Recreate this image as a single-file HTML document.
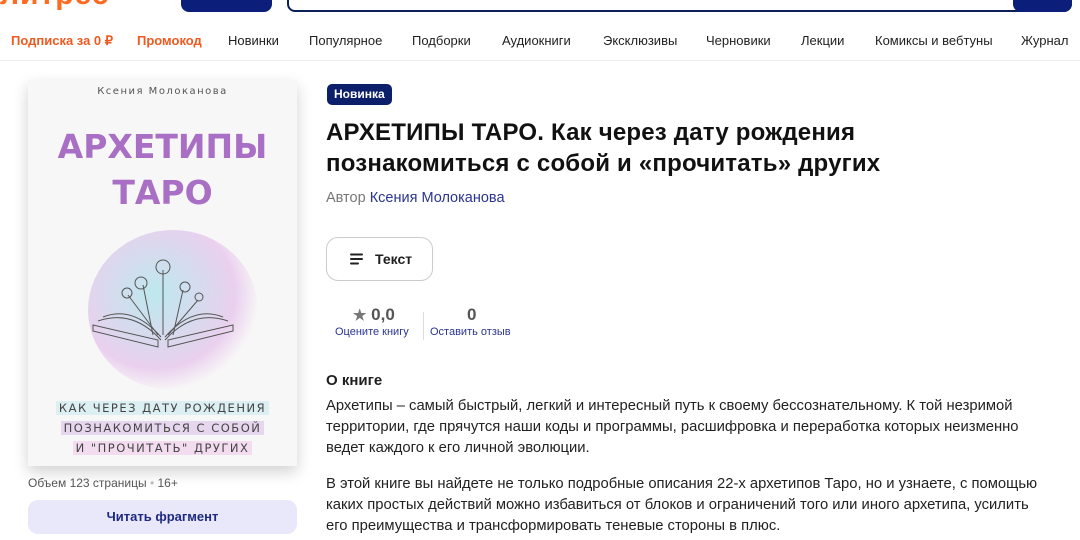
<!DOCTYPE html>
<html><head><meta charset="utf-8"><style>
*{margin:0;padding:0;box-sizing:border-box}
body{width:1080px;height:540px;overflow:hidden;background:#fff;font-family:"Liberation Sans",sans-serif;color:#1f1f1f;position:relative}
.a{position:absolute}
.nav span{position:absolute;top:33px;font-size:13px;color:#1f1f1f;white-space:nowrap}
.cv{font-family:"DejaVu Sans",sans-serif}
</style></head><body>
<div class="a" style="left:0;top:-22px;font-size:30px;font-weight:bold;color:#ff6a1f;letter-spacing:1px">литрес</div>
<div class="a" style="left:181px;top:-10px;width:91px;height:22px;background:#0b1f7a;border-radius:8px"></div>
<div class="a" style="left:287px;top:-10px;width:785px;height:22px;border:2px solid #0b1f5a;border-radius:8px"></div>
<div class="a" style="left:1013px;top:-10px;width:59px;height:22px;background:#0b1f7a;border-radius:8px"></div>
<div class="nav">
<span style="left:11px;color:#ee5a20;font-weight:bold">Подписка за 0 ₽</span>
<span style="left:137px;color:#ee5a20;font-weight:bold">Промокод</span>
<span style="left:228px">Новинки</span>
<span style="left:309px">Популярное</span>
<span style="left:412px">Подборки</span>
<span style="left:502px">Аудиокниги</span>
<span style="left:603px">Эксклюзивы</span>
<span style="left:706px">Черновики</span>
<span style="left:801px">Лекции</span>
<span style="left:875px">Комиксы и вебтуны</span>
<span style="left:1021px">Журнал</span>
</div>
<div class="a" style="left:0;top:60px;width:1080px;height:1px;background:#eee"></div>

<div class="a" style="left:28px;top:80px;width:269px;height:386px;background:#f8f7f7;box-shadow:0 6px 14px rgba(0,0,0,.18)">
<div class="a cv" style="left:0;width:269px;top:6px;text-align:center;font-size:10px;letter-spacing:1.5px;color:#555">Ксения Молоканова</div>
<div class="a cv" style="left:0;width:269px;top:44px;text-align:center;font-size:33px;font-weight:bold;color:#a86fc4;line-height:46px">АРХЕТИПЫ<br>ТАРО</div>
<div class="a" style="left:60px;top:150px;width:170px;height:160px;border-radius:50%;background:radial-gradient(ellipse at 40% 40%,rgba(140,220,230,.55),rgba(220,170,230,.5) 55%,rgba(255,255,255,0) 72%)"></div>
<svg class="a" style="left:55px;top:165px" width="160" height="120" viewBox="0 0 160 120" fill="none" stroke="#555" stroke-width="1">
<path d="M10 80 L75 95 L75 102 L10 86Z M150 80 L85 95 L85 102 L150 86Z M20 72 Q50 60 78 92 M140 72 Q110 60 82 92 M15 76 Q50 64 78 95 M145 76 Q110 64 82 95"/>
<path d="M70 90 L60 40 M80 90 L80 25 M90 90 L100 45 M75 90 L45 50 M85 90 L115 55"/>
<circle cx="80" cy="22" r="7"/><circle cx="58" cy="38" r="6"/><circle cx="102" cy="42" r="5"/><circle cx="44" cy="48" r="5"/><circle cx="116" cy="52" r="4"/>
</svg>
<div class="a cv" style="left:0;width:269px;top:318px;text-align:center;font-size:11.5px;letter-spacing:1.5px;color:#444;line-height:20px">
<span style="background:#dceff3;padding:0 3px">КАК ЧЕРЕЗ ДАТУ РОЖДЕНИЯ</span><br>
<span style="background:#e6d7ef;padding:0 3px">ПОЗНАКОМИТЬСЯ С СОБОЙ</span><br>
<span style="background:#f3dcef;padding:0 3px">И "ПРОЧИТАТЬ" ДРУГИХ</span></div>
</div>
<div class="a" style="left:28px;top:476px;font-size:12px;color:#555">Объем 123 страницы <span style="color:#bbb">•</span> 16+</div>
<div class="a" style="left:28px;top:500px;width:269px;height:34px;background:#e9e8fb;border-radius:10px;text-align:center;line-height:34px;font-size:13px;font-weight:bold;color:#1e2a80">Читать фрагмент</div>

<div class="a" style="left:327px;top:84px;height:21px;padding:0 7px;background:#0b1f6a;color:#fff;border-radius:5px;font-size:12px;font-weight:bold;line-height:21px">Новинка</div>
<div class="a" style="left:326px;top:117px;font-size:24px;font-weight:bold;line-height:31px;color:#111;letter-spacing:0.2px;white-space:nowrap">АРХЕТИПЫ ТАРО. Как через дату рождения<br>познакомиться с собой и «прочитать» других</div>
<div class="a" style="left:326px;top:190px;font-size:14.5px;color:#777">Автор <span style="color:#2a3590">Ксения Молоканова</span></div>
<div class="a" style="left:326px;top:237px;width:107px;height:44px;border:1px solid #ccc;border-radius:12px"></div>
<svg class="a" style="left:350px;top:253px" width="14" height="12"><path d="M1 1.5H12M1 6H12M1 10.5H8" stroke="#222" stroke-width="2" stroke-linecap="round"/></svg>
<div class="a" style="left:375px;top:251px;font-size:14px;font-weight:bold">Текст</div>
<div class="a" style="left:353px;top:305px;font-size:17px;font-weight:bold;color:#555"><span style="color:#777;font-size:15px">★</span> 0,0</div>
<div class="a" style="left:335px;top:326px;font-size:11px;color:#2a3590">Оцените книгу</div>
<div class="a" style="left:423px;top:312px;width:1px;height:28px;background:#ddd"></div>
<div class="a" style="left:467px;top:305px;font-size:17px;font-weight:bold;color:#555">0</div>
<div class="a" style="left:430px;top:326px;font-size:11px;color:#2a3590">Оставить отзыв</div>
<div class="a" style="left:326px;top:372px;font-size:15px;font-weight:bold">О книге</div>
<div class="a" style="left:326px;top:396px;width:712px;font-size:14.8px;line-height:21px;color:#222">Архетипы – самый быстрый, легкий и интересный путь к своему бессознательному. К той незримой территории, где прячутся наши коды и программы, расшифровка и переработка которых неизменно ведет каждого к его личной эволюции.</div>
<div class="a" style="left:326px;top:474px;width:712px;font-size:14.8px;line-height:21px;color:#222">В этой книге вы найдете не только подробные описания 22-х архетипов Таро, но и узнаете, с помощью каких простых действий можно избавиться от блоков и ограничений того или иного архетипа, усилить его преимущества и трансформировать теневые стороны в плюс.</div>
</body></html>
